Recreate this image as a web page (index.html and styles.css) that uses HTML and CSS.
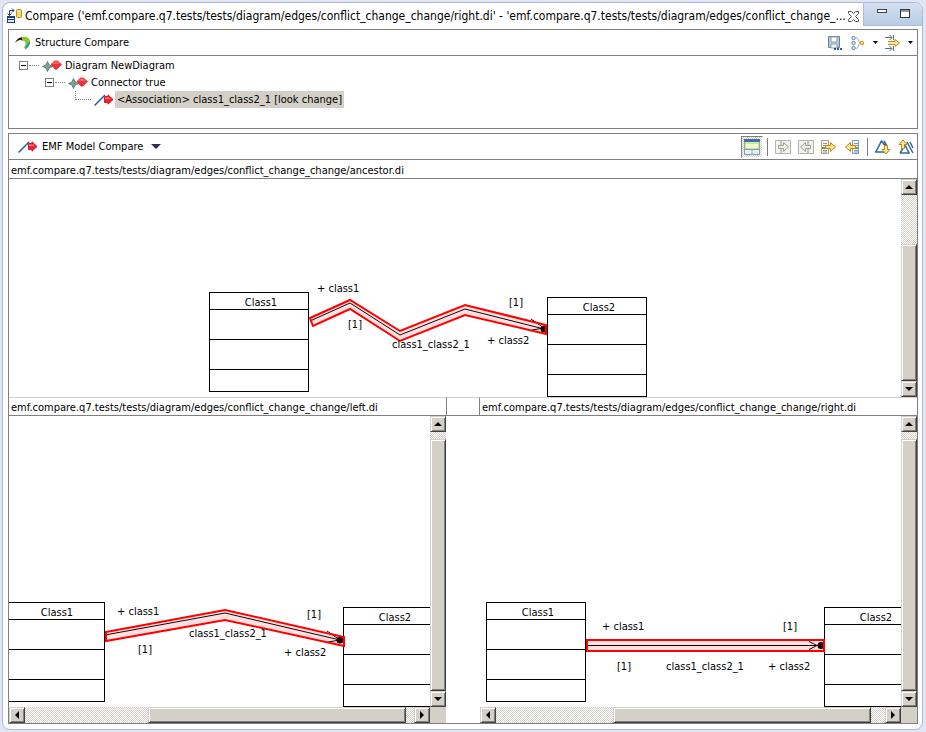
FILE: index.html
```html
<!DOCTYPE html>
<html lang="en">
<head>
<meta charset="utf-8">
<title>Compare</title>
<link rel="stylesheet" href="styles.css">
</head>
<body>
<svg class="defs" aria-hidden="true">
  <defs>
    <symbol id="diamonds" viewBox="0 0 20 12">
      <path d="M5.500 1.500L7 5l3.500 1.500L7 8l-1.500 3.500L4 8 .5 6.500 4 5z" fill="#8b9a92" stroke="#4f8c78"/>
      <path d="M12.500 .5h3L20 4.500 16 8.500l-2 1.500-2-1.500L8.500 4.500z" fill="#e8343c"/>
      <path d="M12.500 1.500h3L18 4h-8z" fill="#f2686c"/>
    </symbol>
    <symbol id="edge-change" viewBox="0 0 20 12">
      <path d="M.5 11.500L11 1" stroke="#2a5a94" stroke-width="1.500" fill="none"/>
      <path d="M10.500 2.500H14V.8L19 5.500 14 10.200V8.500h-3.500z" fill="#ee2430" stroke="#c81c30"/>
      <path d="M11 3.500h4l1.500 1.500H11z" fill="#ff7c7c"/>
    </symbol>
    <g id="class-box" shape-rendering="crispEdges">
      <rect x=".5" y=".5" width="99" height="99" fill="#fff" stroke="#000"/>
      <path d="M0 17.500h100M0 47.500h100M0 77.500h100" stroke="#000"/>
    </g>
  </defs>
</svg>
<main class="editor">
  <header class="tabbar">
    <div class="tab">
      <svg class="tab-icon" width="16" height="16" viewBox="0 0 16 16" aria-hidden="true">
        <path d="M2.500 7V2.500H7M5 .5l2 2-2 2M.5 5.500l2 2 2-2" fill="none" stroke="#23407c"/>
        <rect x=".5" y="8.500" width="7" height="6" fill="#dce8f8" stroke="#23407c"/><path d="M0 9.500h8M0 11.500h8" stroke="#23407c" />
        <rect x="9.500" y="1.500" width="5" height="8" rx="1" fill="#f8d860" stroke="#b88a18"/><path d="M10 3.500h4" stroke="#fff4b8"/>
      </svg>
      <h1>Compare ('emf.compare.q7.tests/tests/diagram/edges/conflict_change_change/right.di' - 'emf.compare.q7.tests/tests/diagram/edges/conflict_change_...</h1>
      <button class="plain" aria-label="Close"><svg width="11" height="11" viewBox="0 0 11 11"><path d="M.5 .5h3l2 2 2-2h3v2l-3 3 3 3v2h-3l-2-2-2 2h-3v-2l3-3-3-3z" fill="#fff" stroke="#555"/></svg></button>
    </div>
    <div class="window-tools">
      <button class="plain" aria-label="Minimize"><svg width="10" height="12" viewBox="0 0 10 12"><rect x=".5" y="2.500" width="9" height="3" fill="#fff" stroke="#444"/></svg></button>
      <button class="plain" aria-label="Maximize"><svg width="10" height="12" viewBox="0 0 10 12"><rect x=".5" y="2.500" width="9" height="8" fill="#fff" stroke="#333"/><path d="M0 4h10" stroke="#333"/></svg></button>
    </div>
  </header>

  <section class="panel structure">
    <div class="toolbar">
      <svg width="16" height="14" viewBox="0 0 16 14" aria-hidden="true">
        <path d="M0 7C2 2 6 0 9.500 2L8 4.500C5 3 2.500 4.500 0 7z" fill="#222"/>
        <path d="M7 1.500c4-2 8 .5 8 4.500 0 3-2 6-5 7.500L9 11c2.500-3 2-5.500-2-7z" fill="#8cc81e"/>
        <path d="M12 8l3-2.500c0 3.500-2 6.500-5 8z" fill="#1c98b8"/>
      </svg>
      <h2>Structure Compare</h2>
      <div class="tools">
        <button class="plain" aria-label="Save"><svg width="16" height="16" viewBox="0 0 16 16"><path d="M1.500 1.500h11v11h-11z" fill="#b8c8dc" stroke="#6c7f98"/><path d="M4 2h6v5H4z" fill="#fff" stroke="#8ea4b8"/><path d="M4 9h6v4H4z" fill="#eef4e0" stroke="#8ea4b8"/><path d="M7 14h2M10 14h2M13 14h2" stroke="#2c5a9c" stroke-width="2"/></svg></button>
        <button class="plain" aria-label="Group"><svg width="16" height="16" viewBox="0 0 16 16"><g fill="#d8e8f8" stroke="#5c88b8"><circle cx="3.500" cy="3" r="1.700"/><circle cx="3.500" cy="8" r="1.700"/><circle cx="3.500" cy="13" r="1.700"/></g><path d="M6 2.500c3 .5 2 4 4 5.500-2 1.500-1 5-4 5.500" fill="none" stroke="#9aacbc"/><circle cx="12" cy="8" r="1.800" fill="#f8e080" stroke="#c89018"/></svg></button>
        <button class="plain caret" aria-label="Group menu"><svg width="5" height="3" viewBox="0 0 5 3"><path d="M0 0h5L2.500 3z"/></svg></button>
        <button class="plain" aria-label="Filter"><svg width="16" height="16" viewBox="0 0 16 16"><path d="M0 2.500h7M4.500 0L7 2.500 4.500 5M8.500 0v5M0 13.500h7M4.500 11L7 13.500 4.500 16M8.500 11v5" fill="none" stroke="#5a7486"/><path d="M3 6.500h7v-2L14.500 8 10 11.500v-2H3" fill="#fbe7a0" stroke="#c88a1c"/></svg></button>
        <button class="plain caret" aria-label="Filter menu"><svg width="5" height="3" viewBox="0 0 5 3"><path d="M0 0h5L2.500 3z"/></svg></button>
      </div>
    </div>
    <ul class="tree">
      <li><div class="row"><button class="expander" aria-label="Collapse"></button><i class="branch"></i><svg width="20" height="12"><use href="#diamonds"/></svg><span>Diagram NewDiagram</span></div>
        <ul>
          <li><div class="row"><button class="expander" aria-label="Collapse"></button><i class="branch"></i><svg width="20" height="12"><use href="#diamonds"/></svg><span>Connector true</span></div>
            <ul>
              <li><div class="row"><i class="branch corner"></i><svg width="20" height="12"><use href="#edge-change"/></svg><span class="selected">&lt;Association&gt; class1_class2_1 [look change]</span></div></li>
            </ul>
          </li>
        </ul>
      </li>
    </ul>
  </section>

  <section class="panel compare">
    <div class="toolbar">
      <svg width="20" height="12" aria-hidden="true"><use href="#edge-change"/></svg>
      <h2>EMF Model Compare</h2>
      <button class="plain viewer-menu" aria-label="Viewer menu"><svg width="10" height="5" viewBox="0 0 10 5"><path d="M0 0h10L5 5z" fill="#2c2c58"/></svg></button>
      <div class="tools">
        <button class="plain toggled" aria-label="Show ancestor"><svg width="16" height="16" viewBox="0 0 16 16"><path d="M.5 .5h15v15H.5z" fill="#fff" stroke="#7c9cb4"/><path d="M0 0h16v3H0z" fill="#3a70ac"/><path d="M1 4h14v6H1z" fill="#f0fac8" stroke="#a8cc68"/><path d="M0 10.500h16M8 11v5" stroke="#7c9cb4"/><path d="M1 11.500h6V15H1zM9 11.500h6V15H9z" fill="#e4f0fa"/></svg></button>
        <i class="divider"></i>
        <button class="plain" aria-label="Copy all left to right"><svg width="16" height="16" viewBox="0 0 16 16"><path d="M.5 1.500H6v13H.5zM6 1.500h9.500v13H6z" fill="#f2f2ee" stroke="#b4b4ac"/><path d="M3.500 6.500h5v-3L13.500 8l-5 4.500v-3h-5z" fill="#eeeee4" stroke="#a0a098"/></svg></button>
        <button class="plain" aria-label="Copy all right to left"><svg width="16" height="16" viewBox="0 0 16 16"><path d="M.5 1.500H10v13H.5zM10 1.500h5.500v13H10z" fill="#f2f2ee" stroke="#b4b4ac"/><path d="M12.500 6.500h-5v-3L2.500 8l5 4.500v-3h5z" fill="#eeeee4" stroke="#a0a098"/></svg></button>
        <button class="plain" aria-label="Copy current left to right"><svg width="16" height="16" viewBox="0 0 16 16"><path d="M.5 1.500h7v13h-7z" fill="#f8f8f0" stroke="#b0a070"/><path d="M2 4.500h4M2 6.500h4M2 11.500h4M2 13h4" stroke="#7c98c0"/><path d="M1 8h5v2H1z" fill="#6ca030"/><path d="M4.500 6.500h5v-3L14.500 8l-5 4.500v-3h-5z" fill="#fde68c" stroke="#c08418"/></svg></button>
        <button class="plain" aria-label="Copy current right to left"><svg width="16" height="16" viewBox="0 0 16 16"><path d="M8.500 1.500h6v13h-6z" fill="#f8f8f0" stroke="#7c98c0"/><path d="M10 4.500h4M10 6.500h4M10 11.500h4M10 13h4" stroke="#7c98c0"/><path d="M10 8h4v2h-4z" fill="#6ca030"/><path d="M11.500 6.500h-5v-3L1.500 8l5 4.500v-3h5z" fill="#fde68c" stroke="#c08418"/></svg></button>
        <i class="divider"></i>
        <button class="plain" aria-label="Next difference"><svg width="16" height="16" viewBox="0 0 16 16"><path d="M1 12.500L6.500 2 11 8M0 13h9M9 2l3 5" fill="none" stroke="#2c68a4" stroke-width="1.500"/><path d="M9.500 6.500h3v4h2.500L11 15l-4-4.500h2.500z" fill="#fde68c" stroke="#c08418"/></svg></button>
        <button class="plain" aria-label="Previous difference"><svg width="16" height="16" viewBox="0 0 16 16"><path d="M2 14l5-8 4 8H2M9 3l6 11M12 3l3 6" fill="none" stroke="#2c68a4" stroke-width="1.500"/><path d="M3.500 9.500v-4H1L5 1l4 4.500H6.500v4z" fill="#fde68c" stroke="#c08418"/></svg></button>
      </div>
    </div>

    <div class="panes">
      <article class="pane ancestor">
        <h3>emf.compare.q7.tests/tests/diagram/edges/conflict_change_change/ancestor.di</h3>
        <div class="view">
          <svg class="canvas" role="img" aria-label="Ancestor diagram">
            <use href="#class-box" x="200" y="113"/>
            <use href="#class-box" x="538" y="118"/>
            <g class="edge">
              <path class="link" d="M301 142L341 124 391 156 456 130 535 150"/>
              <path class="link" d="M522 140l13 9-12 2"/><circle cx="535" cy="150" r="3.500"/>
              <path class="halo" d="M301 139L341 121 391 152 456 126 537 146V155L456 136 391 162 341 130 304 147z"/>
            </g>
            <text class="name" x="252" y="127">Class1</text>
            <text class="name" x="590" y="132">Class2</text>
            <text x="308" y="113">+ class1</text>
            <text x="339" y="149">[1]</text>
            <text x="383" y="169">class1_class2_1</text>
            <text x="500" y="127">[1]</text>
            <text x="478" y="165">+ class2</text>
          </svg>
          <div class="scroll vertical ancestor-v"><button class="up" aria-label="Scroll up"></button><i class="before"></i><i class="thumb"></i><button class="down" aria-label="Scroll down"></button></div>
        </div>
      </article>

      <article class="pane left">
        <h3>emf.compare.q7.tests/tests/diagram/edges/conflict_change_change/left.di</h3>
        <div class="view">
          <svg class="canvas" role="img" aria-label="Left diagram">
            <use href="#class-box" x="-4" y="186"/>
            <use href="#class-box" x="334" y="191"/>
            <g class="edge">
              <path class="link" d="M96 219L216 197 331 224"/>
              <path class="link" d="M318 215l13 9-12 2"/><circle cx="331" cy="224" r="3.500"/>
              <path class="halo" d="M97 216L216 194 335 221V230L216 204 97 225z"/>
            </g>
            <text class="name" x="48" y="200">Class1</text>
            <text class="name" x="386" y="205">Class2</text>
            <text x="108" y="199">+ class1</text>
            <text x="129" y="237">[1]</text>
            <text x="180" y="221">class1_class2_1</text>
            <text x="298" y="202">[1]</text>
            <text x="275" y="240">+ class2</text>
          </svg>
          <div class="scroll vertical side-v"><button class="up" aria-label="Scroll up"></button><i class="before"></i><i class="thumb"></i><button class="down" aria-label="Scroll down"></button></div>
          <div class="scroll horizontal left-h"><button class="back" aria-label="Scroll left"></button><i class="before"></i><i class="thumb"></i><i class="after"></i><button class="forward" aria-label="Scroll right"></button></div>
          <i class="grip"></i>
        </div>
      </article>

      <div class="gutter"></div>

      <article class="pane right">
        <h3>emf.compare.q7.tests/tests/diagram/edges/conflict_change_change/right.di</h3>
        <div class="view">
          <svg class="canvas" role="img" aria-label="Right diagram">
            <use href="#class-box" x="6" y="186"/>
            <use href="#class-box" x="344" y="191"/>
            <g class="edge">
              <path class="link" d="M106 229.500H341M329 225.500l8 4-8 4"/><circle cx="341" cy="229.500" r="3.500"/>
              <path class="halo" d="M107 224H344V235H107z"/>
            </g>
            <text class="name" x="58" y="200">Class1</text>
            <text class="name" x="396" y="205">Class2</text>
            <text x="122" y="214">+ class1</text>
            <text x="137" y="254">[1]</text>
            <text x="186" y="254">class1_class2_1</text>
            <text x="303" y="214">[1]</text>
            <text x="288" y="254">+ class2</text>
          </svg>
          <div class="scroll vertical side-v"><button class="up" aria-label="Scroll up"></button><i class="before"></i><i class="thumb"></i><button class="down" aria-label="Scroll down"></button></div>
          <div class="scroll horizontal right-h"><button class="back" aria-label="Scroll left"></button><i class="before"></i><i class="thumb"></i><i class="after"></i><button class="forward" aria-label="Scroll right"></button></div>
          <i class="grip"></i>
        </div>
      </article>
    </div>
  </section>
</main>
</body>
</html>
```
FILE: styles.css
```css
* { box-sizing: border-box; }
body {
  margin: 0;
  min-height: 100vh;
  display: flex;
  padding: 2px 3px 2px 2px;
  background: #e1e6f6;
  color: #000;
  font: 11px/14px "DejaVu Sans Condensed", "Noto Sans", sans-serif;
}
h1, h2, h3, ul { margin: 0; padding: 0; font: inherit; list-style: none; }
svg { display: block; flex: none; }
.defs { position: absolute; width: 0; height: 0; }
.plain { display: flex; padding: 0; border: 0; background: none; }

.editor {
  flex: 1;
  min-width: 0;
  display: flex;
  flex-direction: column;
  padding: 0 4px 5px 5px;
  border: 1px solid #b0b8d4;
  border-radius: 8px;
  background: #fff;
}
.tabbar { display: flex; height: 26px; margin: 0 -4px 0 -5px; }
.tab { flex: 1; min-width: 0; display: flex; align-items: center; gap: 2px; padding: 0 4px; }
.tab h1 { flex: 1; min-width: 0; white-space: nowrap; font-size: 12px; line-height: 16px; }
.window-tools {
  display: flex;
  gap: 13px;
  padding: 4px 12px 0 13px;
  height: 23px;
  border-left: 1px solid #b0b8d4;
  border-bottom: 1px solid #b0b8d4;
  border-radius: 0 8px 0 0;
  background: linear-gradient(#d4e0f2, #b8cce4);
}

.panel { border: 1px solid #808080; }
.toolbar { display: flex; align-items: center; gap: 4px; height: 26px; padding: 0 4px 0 6px; border-bottom: 1px solid #808080; }
.tools { display: flex; align-items: center; gap: 7px; margin-left: auto; }
.caret { width: 5px; }

.structure { margin-bottom: 4px; padding-bottom: 20px; }
.tree { padding: 1px 0 0 10px; }
.tree ul { padding-left: 26px; }
.row { display: flex; align-items: center; height: 17px; }
.row span { padding: 1px 2px; margin-left: 1px; line-height: 15px; white-space: nowrap; }
.row .selected { background: #d4d0c8; }
.expander {
  width: 9px; height: 9px; padding: 0; border: 1px solid #808080;
  background: linear-gradient(#000, #000) center / 5px 1px no-repeat #fff;
}
.branch { width: 10px; margin: 0 3px 0 1px; border-top: 1px dotted #808080; }
.branch.corner { width: 16px; height: 9px; margin: 0 3px 8px 4px; border-top: 0; border-left: 1px dotted #808080; border-bottom: 1px dotted #808080; }

.compare { flex: 1; display: flex; flex-direction: column; }
.compare .toolbar { padding-left: 9px; padding-right: 3px; }
.viewer-menu { margin-left: 4px; }
.toggled { margin-right: -3px; padding: 2px; border: 1px solid #808080; border-right-color: #fff; border-bottom-color: #fff; background: repeating-conic-gradient(#d4d0c8 0 25%, #fff 0 50%) 0 0 / 2px 2px; }
.divider { width: 1px; height: 18px; background: #808080; }

.panes { flex: 1; display: grid; grid-template: 237fr 326fr / 1fr 34px 1fr; }
.pane { min-width: 0; min-height: 0; display: flex; flex-direction: column; }
.ancestor { grid-column: 1 / -1; }
.pane h3 { height: 19px; padding: 2px 2px 0; border-bottom: 1px solid #808080; line-height: 17px; white-space: nowrap; overflow: hidden; }
.left h3, .right h3 { padding-top: 1px; border-top: 1px solid #d4d0c8; }
.gutter { height: 19px; border: 1px solid #808080; border-top-color: #d4d0c8; }
.view { flex: 1; min-height: 0; display: grid; grid-template: minmax(0, 1fr) auto / minmax(0, 1fr) 16px; }
.canvas { width: 100%; height: 100%; overflow: hidden; }
.canvas .name { text-anchor: middle; }
.link { fill: none; stroke: #000; }
.halo { fill: rgb(255 0 0 / 12%); stroke: #f00; stroke-width: 2px; }

.scroll { display: flex; background: repeating-conic-gradient(#d4d0c8 0 25%, #fff 0 50%) 0 0 / 2px 2px; }
.vertical { flex-direction: column; }
.horizontal { height: 16px; }
.scroll button, .thumb {
  padding: 0;
  border: 1px solid;
  border-color: #d4d0c8 #404040 #404040 #d4d0c8;
  box-shadow: inset 1px 1px #fff, inset -1px -1px #808080;
  background: #d4d0c8 center no-repeat;
}
.scroll button { flex: none; display: grid; place-items: center; width: 16px; height: 16px; }
.scroll button::before { content: ""; border: 4px solid transparent; }
.scroll .up::before { border-width: 0 4px 4px; border-bottom-color: #000; }
.scroll .down::before { border-width: 4px 4px 0; border-top-color: #000; }
.scroll .back::before { border-width: 4px 4px 4px 0; border-right-color: #000; }
.scroll .forward::before { border-width: 4px 0 4px 4px; border-left-color: #000; }
.ancestor-v .before { flex: 50; }
.ancestor-v .thumb { flex: 136; }
.side-v .before { flex: 7; }
.side-v .thumb { flex: 252; }
.left-h .before { flex: 124; }
.left-h .thumb { flex: 257; }
.left-h .after { flex: 8; }
.right-h .before { flex: 118; }
.right-h .thumb { flex: 257; }
.right-h .after { flex: 14; }
.grip { background: #d4d0c8; }
```
